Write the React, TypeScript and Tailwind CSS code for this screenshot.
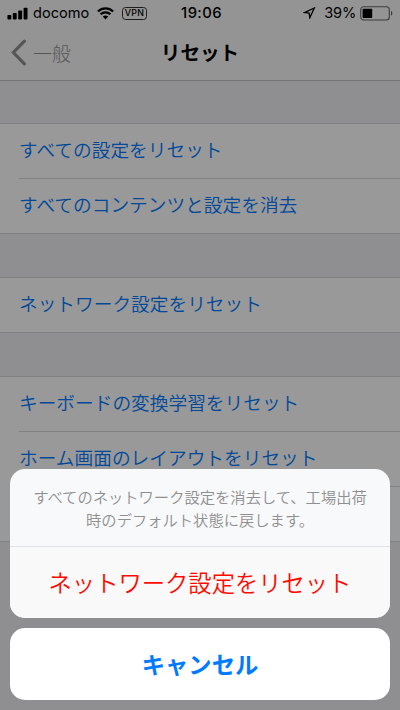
import React from "react";

// The last row of the third group sits behind the action sheet
const GROUPS = [
  ["すべての設定をリセット", "すべてのコンテンツと設定を消去"],
  ["ネットワーク設定をリセット"],
  ["キーボードの変換学習をリセット", "ホーム画面のレイアウトをリセット", ""],
];

const StatusBar = () => (
  <div className="flex h-[26px] items-center pr-[7px] pl-[7px] font-['Inter','Liberation_Sans',sans-serif] text-[14px] leading-none text-black">
    <div className="flex flex-1 items-center">
      <svg width="21" height="13" viewBox="0 0 21 13" fill="currentColor">
        <rect x="0.4" y="8" width="3.9" height="4.4" rx="0.8" />
        <rect x="5.8" y="6" width="3.9" height="6.4" rx="0.8" />
        <rect x="11.2" y="3.5" width="3.9" height="8.9" rx="0.8" />
        <rect x="16.6" y="0.7" width="3.9" height="11.7" rx="0.8" />
      </svg>
      <span className="ml-[5px] w-[57px] text-[14.6px] whitespace-nowrap">docomo</span>
      <svg className="ml-[7px]" width="17" height="13" viewBox="0 0 17 13" fill="none" stroke="currentColor" strokeWidth="2.2">
        <path d="M0.9 4.5C5.1 0.3 11.9 0.3 16.1 4.5" />
        <path d="M3.6 7.3C6.3 4.7 10.7 4.7 13.4 7.3" />
        <path d="M8.5 12.4 5.8 9.6C7.3 8.2 9.7 8.2 11.2 9.6Z" fill="currentColor" stroke="none" />
      </svg>
      <span className="ml-[8px] flex h-[13px] w-[25px] items-center justify-center rounded-[3.5px] border border-[#333] text-[8.8px] font-medium tracking-[0.3px]">
        VPN
      </span>
    </div>
    <span className="pl-[3px] text-[14.8px] font-medium tracking-[0.4px]">19:06</span>
    <div className="flex flex-1 items-center justify-end">
      <svg width="13" height="12" viewBox="0 0 13 12" fill="none" stroke="currentColor" strokeWidth="1.3" strokeLinejoin="miter">
        <path d="M11.3 1 1.5 5.6 6.2 6.2 6.8 10.8Z" />
      </svg>
      <span className="ml-[8px] text-[14.6px] tracking-[-0.2px]">39%</span>
      <svg className="ml-[4px]" width="33" height="15" viewBox="0 0 33 15">
        <rect x="0.7" y="0.8" width="28.6" height="13.2" rx="3" fill="none" stroke="#666" strokeWidth="1.1" />
        <rect x="2.6" y="2.8" width="9.6" height="9.2" rx="0.8" fill="#000" />
        <path d="M31 5.1C32.8 5.8 32.8 9 31 9.7Z" fill="#666" />
      </svg>
    </div>
  </div>
);

const NavBar = () => (
  <div className="grid h-[54px] grid-cols-3 items-center pb-[2px]">
    <div className="flex items-center pl-[11px] text-[#8f8f8f]">
      <svg width="16" height="27" viewBox="0 0 16 27" fill="none" stroke="currentColor" strokeWidth="3.2" strokeLinecap="round">
        <path d="M13.4 2.2 2.4 13.5 13.4 24.8" />
      </svg>
      <span className="ml-[6px] text-[19px] leading-none font-light">一般</span>
    </div>
    <h1 className="text-center text-[19.6px] leading-none font-bold text-black">リセット</h1>
  </div>
);

const SettingsGroup = ({ rows }: { rows: string[] }) => (
  <div className="mb-[43px] border-y border-[#d8d8db] bg-white">
    {rows.map((row, i) => (
      <div key={row} className="pl-[19px]">
        <div
          className={`flex items-center pb-[3px] text-[18.7px] font-[350] text-[#007aff] ${
            i > 0 ? "h-[55px] border-t border-[#d8d8db]" : "h-[54px]"
          }`}
        >
          {row}
        </div>
      </div>
    ))}
  </div>
);

const ActionSheet = () => (
  <div className="absolute inset-x-[10px] bottom-[10px]">
    <div className="mb-[10px] overflow-hidden rounded-[15px] bg-[#f8f9fa]">
      <p className="flex h-[78px] flex-col items-center justify-center border-b border-[#e1e2e4] text-[15.3px] leading-[22.5px] font-[350] text-[#8f8f8f]">
        <span>すべてのネットワーク設定を消去して、工場出荷</span>
        <span>時のデフォルト状態に戻します。</span>
      </p>
      <button className="block h-[71px] w-full bg-[#f9f9f9] text-[23.3px] font-[350] text-[#ff0a00]">
        ネットワーク設定をリセット
      </button>
    </div>
    <button className="block h-[72px] w-full rounded-[15px] bg-white text-[23.3px] font-bold text-[#007aff]">
      キャンセル
    </button>
  </div>
);

export default function App() {
  return (
    <div className="relative h-[710px] w-[400px] overflow-hidden bg-[#efeff4] font-['Noto_Sans_CJK_JP',sans-serif]">
      <header className="border-b border-[#c2c2c4] bg-[#f7f7f7]">
        <StatusBar />
        <NavBar />
      </header>
      <main className="pt-[42px]">
        {GROUPS.map((rows) => (
          <SettingsGroup key={rows[0]} rows={rows} />
        ))}
      </main>

      {/* Dimmed backdrop */}
      <div className="absolute inset-0 bg-black/40" />
      <ActionSheet />
    </div>
  );
}
